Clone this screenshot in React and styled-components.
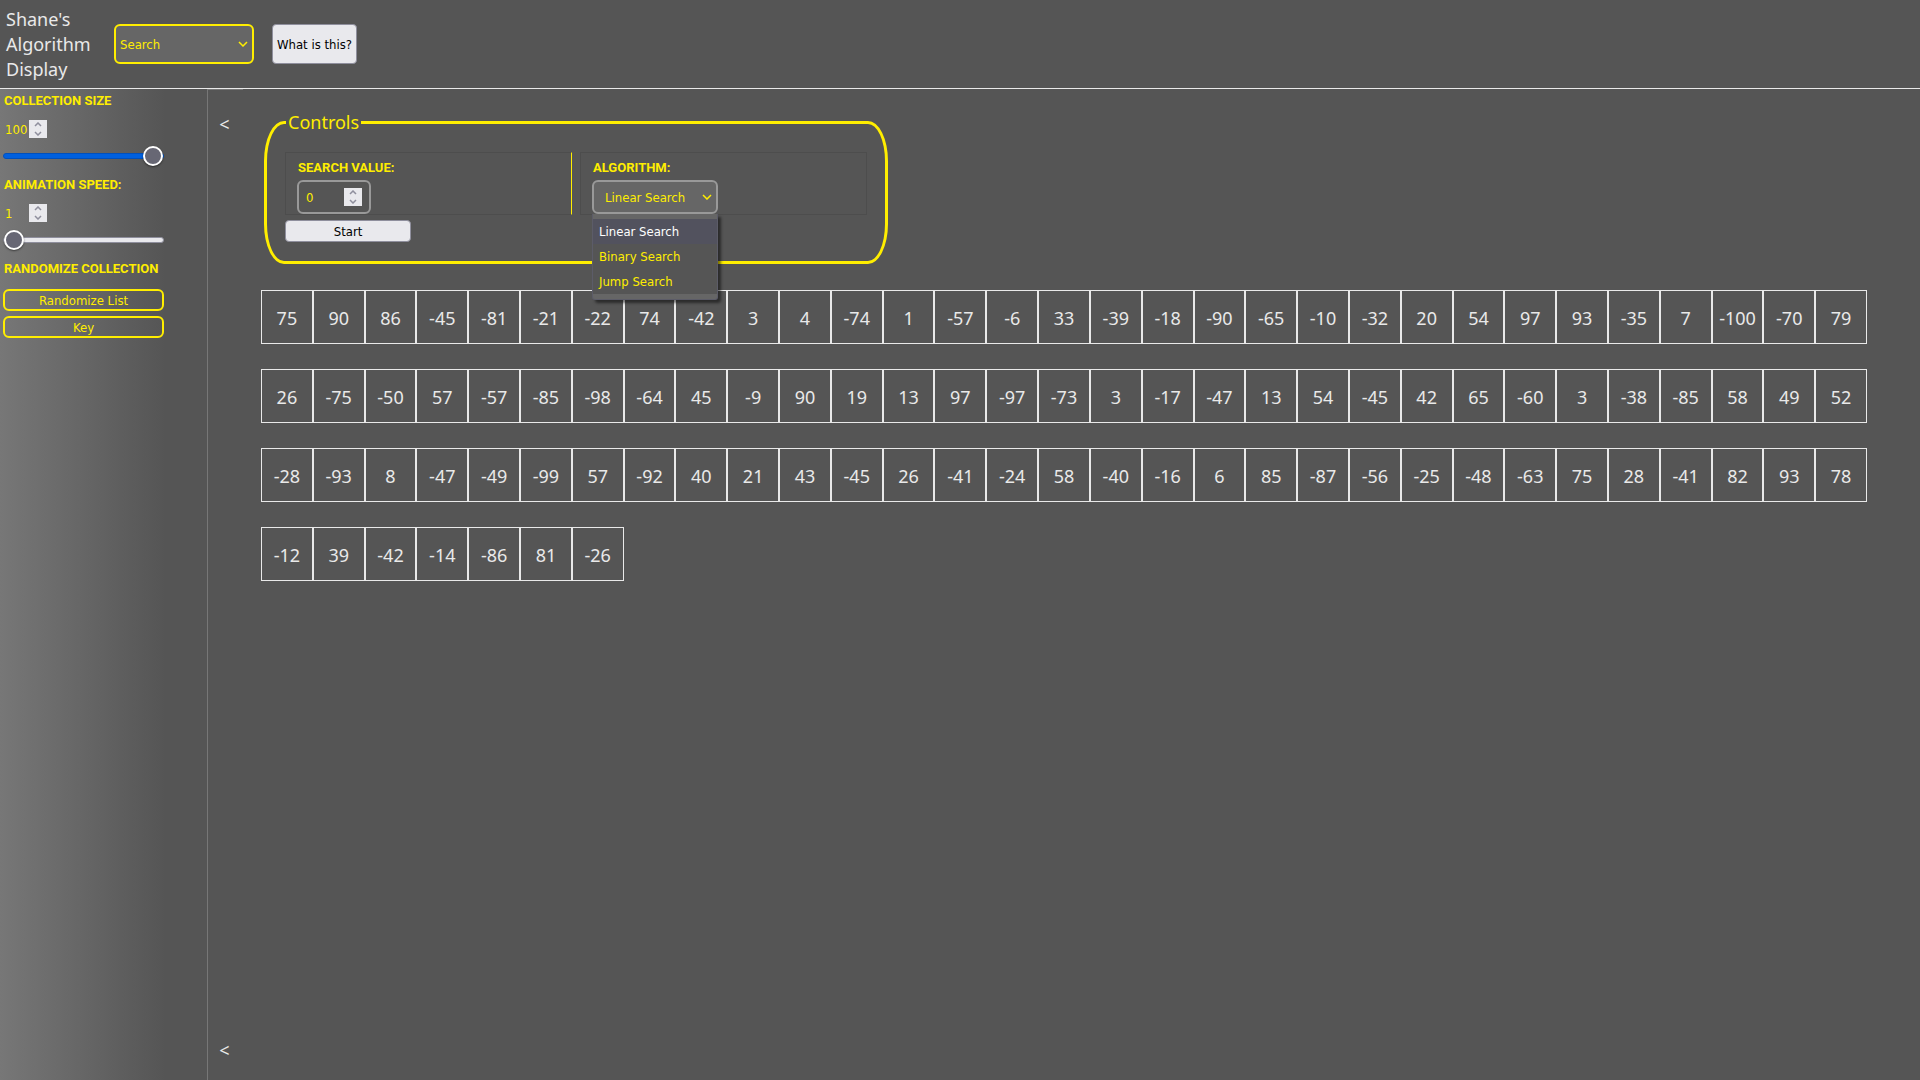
import React, { useState } from "react";
import styled, { createGlobalStyle } from "styled-components";

const ui = '"Noto Sans", "Open Sans", sans-serif';
const control = '"DejaVu Sans Condensed", "DejaVu Sans", sans-serif';
const display = 'Roboto, "Liberation Sans", sans-serif';
const yellow = "#ffee00";
const ink = "#e9e9e9";
const ground = "#555555";

const GlobalStyle = createGlobalStyle`
  *, *::before, *::after { box-sizing: border-box; }
  body { margin: 0; background: ${ground}; color: ${ink}; font: 18px/25px ${ui}; }
  button, input, select { font: 13px/16px ${control}; margin: 0; }
`;

const Page = styled.div`
  min-height: 100vh;
  display: flex;
  flex-direction: column;
`;

const Header = styled.header`
  display: flex;
  align-items: center;
  height: 89px;
  padding: 0 6px;
  border-bottom: 1px solid ${ink};
`;

const Title = styled.h1`
  width: 108px;
  margin: 0;
  padding-right: 20px;
  font-size: 18px;
  font-weight: 400;
  line-height: 25px;
`;

const SelectWrap = styled.div`
  position: relative;
  width: ${(p) => p.$width};
`;

const Select = styled.select`
  appearance: none;
  display: block;
  width: 100%;
  height: ${(p) => p.$height};
  padding: 1px ${(p) => p.$pad} 0;
  border: 2px solid ${(p) => p.$edge};
  border-radius: 6px;
  background: #666666;
  color: ${yellow};
`;

const Chevron = styled.svg`
  position: absolute;
  right: 6px;
  top: 50%;
  width: 10px;
  height: 6px;
  margin-top: -3px;
  fill: none;
  stroke: ${yellow};
  stroke-width: 1.5;
  pointer-events: none;
`;

const PlainButton = styled.button`
  display: block;
  width: ${(p) => p.$width};
  height: ${(p) => p.$height};
  padding: 1px 0 0;
  border: 1px solid #8f8f9d;
  border-radius: 4px;
  background: #e9e9ed;
  color: #000;
  white-space: nowrap;
`;

const HelpButton = styled(PlainButton)`
  margin-left: 18px;
`;

const Body = styled.div`
  flex: 1;
  display: flex;
`;

const Sidebar = styled.aside`
  flex: 0 0 207px;
  min-width: 0;
  padding: 0 43px 0 3px;
  background: linear-gradient(90deg, #777777, ${ground} 80%);
`;

const Group = styled.section`
  height: 84px;
`;

const Heading = styled.label`
  display: block;
  padding-left: 1px;
  font: 700 13px/24px ${display};
  color: ${yellow};
  text-transform: uppercase;
  white-space: nowrap;
`;

const GroupTitle = styled(Heading).attrs({ as: "h2" })`
  margin: 0;
`;

const NumberBox = styled.div`
  display: flex;
  align-items: center;
  width: ${(p) => (p.$framed ? "74px" : "44px")};
  height: ${(p) => (p.$framed ? "34px" : "18px")};
  padding: ${(p) => (p.$framed ? "0 7px" : "0 0 0 2px")};
  border: ${(p) => (p.$framed ? "2px solid #999999" : "0")};
  border-radius: 6px;
`;

const SideNumber = styled.div`
  padding: 7px 0 8px;
`;

const NumberInput = styled.input`
  appearance: textfield;
  flex: 1;
  min-width: 0;
  height: 18px;
  padding: 0;
  border: 0;
  outline: 0;
  background: transparent;
  color: ${yellow};
  &::-webkit-inner-spin-button { appearance: none; margin: 0; }
`;

const Steps = styled.div`
  display: flex;
  flex-direction: column;
  width: 18px;
  height: 18px;
  background: #e9e9ed;
`;

const Step = styled.button`
  display: flex;
  align-items: center;
  justify-content: center;
  height: 9px;
  padding: 0;
  border: 0;
  background: transparent;
  svg { width: 8px; height: 5px; fill: none; stroke: #8f8f9d; stroke-width: 1.5; }
`;

const Slider = styled.input`
  appearance: none;
  display: block;
  width: 100%;
  height: 20px;
  background: transparent;
  &::-webkit-slider-runnable-track {
    height: 6px;
    border: 1px solid ${(p) => (p.$full ? "#0250bb" : "#8f8f9d")};
    border-radius: 3px;
    background: ${(p) => (p.$full ? "#0060df" : "#e9e9ed")};
  }
  &::-webkit-slider-thumb {
    appearance: none;
    width: 20px;
    height: 20px;
    margin-top: -8px;
    border: 2px solid #fff;
    border-radius: 50%;
    background: #676774;
    box-shadow: 0 1px 2px rgba(0, 0, 0, 0.5);
  }
`;

const ButtonStack = styled.div`
  display: grid;
  gap: 5px;
  padding-top: 8px;
`;

const OutlineButton = styled.button`
  height: 22px;
  padding: 1px 0 0;
  border: 2px solid ${yellow};
  border-radius: 6px;
  background: transparent;
  color: ${yellow};
`;

const Collapse = styled.button`
  flex: 0 0 36px;
  display: flex;
  flex-direction: column;
  justify-content: space-between;
  align-items: center;
  padding: 22px 2px 17px 0;
  border: 1px solid #777777;
  border-width: 1px 0 0 1px;
  background: transparent;
  color: ${ink};
  font: 18px/25px ${ui};
`;

const Main = styled.main`
  flex: 1;
  min-width: 0;
  padding: 21px 53px 20px 18px;
`;

const Controls = styled.fieldset`
  width: 624px;
  max-width: 100%;
  height: 154px;
  margin: 0 0 26px 3px;
  padding: 17px 18px 0;
  border: 3px solid ${yellow};
  border-radius: 20px / 40px;
`;

const Legend = styled.legend`
  margin-left: 1px;
  padding: 0 2px;
  color: ${yellow};
`;

const Panels = styled.div`
  display: grid;
  grid-template-columns: 1fr 1fr;
  gap: 8px;
  margin-bottom: 5px;
`;

const Panel = styled.div`
  height: 63px;
  padding: 3px 11px 0;
  border: 1px solid #4d4d4d;
  border-right-color: ${(p) => (p.$divided ? yellow : "#4d4d4d")};
`;

const Options = styled.ul`
  position: absolute;
  z-index: 2;
  top: 100%;
  left: 0;
  right: 0;
  margin: 0;
  padding: 5px 0;
  border: 1px solid #5c5c68;
  border-top: 0;
  border-radius: 0 0 3px 3px;
  background: #666666;
  box-shadow: 3px 3px 3px rgba(0, 0, 0, 0.5);
  list-style: none;
`;

const Option = styled.li`
  padding-left: 6px;
  font: 13px/25px ${control};
  color: ${(p) => (p.$active ? "#fff" : yellow)};
  background: ${(p) => (p.$active ? "#52525e" : ground)};
`;

const Values = styled.div`
  display: grid;
  grid-template-columns: repeat(31, 1fr);
  row-gap: 25px;
`;

const Cell = styled.div`
  display: flex;
  align-items: center;
  justify-content: center;
  height: 54px;
  padding-top: 2px;
  border: 1px solid ${ink};
`;

const values = [
  75, 90, 86, -45, -81, -21, -22, 74, -42, 3, 4, -74, 1, -57, -6, 33, -39, -18, -90, -65, -10, -32, 20, 54, 97, 93, -35, 7, -100, -70, 79,
  26, -75, -50, 57, -57, -85, -98, -64, 45, -9, 90, 19, 13, 97, -97, -73, 3, -17, -47, 13, 54, -45, 42, 65, -60, 3, -38, -85, 58, 49, 52,
  -28, -93, 8, -47, -49, -99, 57, -92, 40, 21, 43, -45, 26, -41, -24, 58, -40, -16, 6, 85, -87, -56, -25, -48, -63, 75, 28, -41, 82, 93, 78,
  -12, 39, -42, -14, -86, 81, -26,
];
const algorithms = ["Linear Search", "Binary Search", "Jump Search"];

function Arrow() {
  return (
    <Chevron viewBox="0 0 10 6" aria-hidden="true">
      <path d="M1 1l4 4 4-4" />
    </Chevron>
  );
}

function NumberField({ id, value, onChange, framed }) {
  return (
    <NumberBox $framed={framed}>
      <NumberInput id={id} type="number" value={value} onChange={(e) => onChange(Number(e.target.value))} />
      <Steps>
        <Step type="button" aria-label="Increase" onClick={() => onChange(value + 1)}>
          <svg viewBox="0 0 8 5"><path d="M1 4l3-3 3 3" /></svg>
        </Step>
        <Step type="button" aria-label="Decrease" onClick={() => onChange(value - 1)}>
          <svg viewBox="0 0 8 5"><path d="M1 1l3 3 3-3" /></svg>
        </Step>
      </Steps>
    </NumberBox>
  );
}

function RangeGroup({ id, label, value, onChange }) {
  return (
    <Group>
      <Heading htmlFor={id}>{label}</Heading>
      <SideNumber>
        <NumberField id={id} value={value} onChange={onChange} />
      </SideNumber>
      <Slider
        type="range"
        min="1"
        max="100"
        aria-label={label}
        value={value}
        $full={value > 1}
        onChange={(e) => onChange(Number(e.target.value))}
      />
    </Group>
  );
}

export default function App() {
  const [size, setSize] = useState(100);
  const [speed, setSpeed] = useState(1);
  const [target, setTarget] = useState(0);
  const [algorithm, setAlgorithm] = useState(algorithms[0]);

  return (
    <Page>
      <GlobalStyle />
      <Header>
        <Title>Shane's Algorithm Display</Title>
        <SelectWrap $width="140px">
          <Select aria-label="Category" $height="40px" $pad="4px" $edge={yellow}>
            <option>Search</option>
          </Select>
          <Arrow />
        </SelectWrap>
        <HelpButton type="button" $width="85px" $height="40px">What is this?</HelpButton>
      </Header>
      <Body>
        <Sidebar>
          <RangeGroup id="size" label="Collection Size" value={size} onChange={setSize} />
          <RangeGroup id="speed" label="Animation Speed:" value={speed} onChange={setSpeed} />
          <GroupTitle>Randomize Collection</GroupTitle>
          <ButtonStack>
            <OutlineButton type="button">Randomize List</OutlineButton>
            <OutlineButton type="button">Key</OutlineButton>
          </ButtonStack>
        </Sidebar>
        <Collapse type="button" aria-label="Collapse sidebar">
          <span>&lt;</span>
          <span>&lt;</span>
        </Collapse>
        <Main>
          <Controls>
            <Legend>Controls</Legend>
            <Panels>
              <Panel $divided>
                <Heading htmlFor="target">Search Value:</Heading>
                <NumberField id="target" value={target} onChange={setTarget} framed />
              </Panel>
              <Panel>
                <Heading htmlFor="algorithm">Algorithm:</Heading>
                <SelectWrap $width="126px">
                  <Select
                    id="algorithm"
                    value={algorithm}
                    onChange={(e) => setAlgorithm(e.target.value)}
                    $height="34px"
                    $pad="11px"
                    $edge="#999999"
                  >
                    {algorithms.map((name) => <option key={name}>{name}</option>)}
                  </Select>
                  <Arrow />
                  <Options role="listbox" aria-label="Algorithm">
                    {algorithms.map((name) => (
                      <Option
                        key={name}
                        role="option"
                        aria-selected={name === algorithm}
                        $active={name === algorithm}
                        onClick={() => setAlgorithm(name)}
                      >
                        {name}
                      </Option>
                    ))}
                  </Options>
                </SelectWrap>
              </Panel>
            </Panels>
            <PlainButton type="button" $width="126px" $height="22px">Start</PlainButton>
          </Controls>
          <Values>
            {values.map((value, index) => <Cell key={index}>{value}</Cell>)}
          </Values>
        </Main>
      </Body>
    </Page>
  );
}
